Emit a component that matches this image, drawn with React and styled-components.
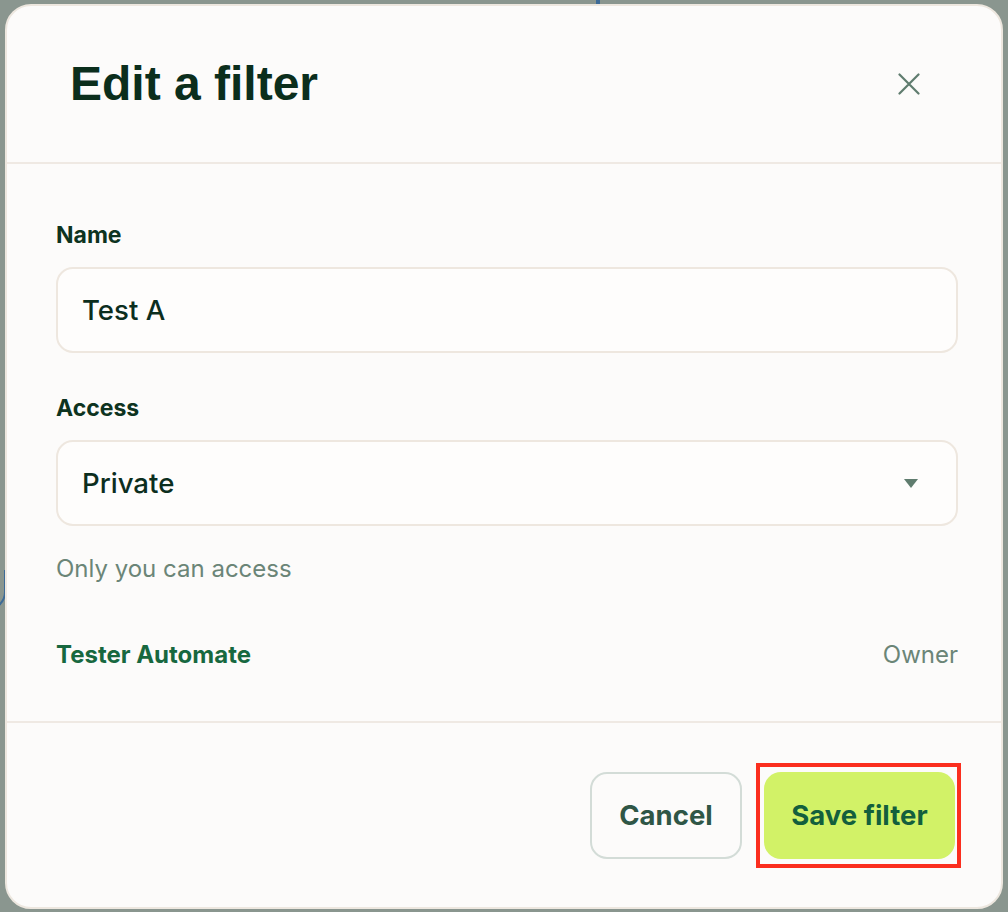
import React from "react";
import styled, { createGlobalStyle } from "styled-components";

const Global = createGlobalStyle`
  html, body { margin: 0; padding: 0; }
  body { background: #8a968f; font-family: Inter, "Noto Sans", sans-serif; }
  #root { width: 1008px; height: 912px; overflow: hidden; }
  * { box-sizing: border-box; }
`;

const Backdrop = styled.div`
  position: relative;
  width: 1008px;
  height: 912px;
  background: #8a968f;
  padding: 4px 0 0 5px;
`;

const PageBitTop = styled.div`
  position: absolute;
  left: 596px;
  top: 0;
  width: 4px;
  height: 4px;
  background: #3d6b97;
`;

const PageBitLeft = styled.div`
  position: absolute;
  left: -14px;
  top: 570px;
  width: 20px;
  height: 40px;
  border-right: 2px solid #3d6b97;
  border-bottom: 2px solid #3d6b97;
  border-radius: 0 0 18px 0;
`;

const Modal = styled.div`
  position: relative;
  width: 998px;
  background: #fcfbfa;
  border: 2px solid #ede7df;
  border-radius: 26px;
  display: flex;
  flex-direction: column;
`;

const Header = styled.div`
  height: 158px;
  border-bottom: 2px solid #efe9e3;
  display: flex;
  align-items: center;
  justify-content: space-between;
  padding: 0 72px 0 63px;
`;

const Title = styled.h1`
  margin: 0;
  font-family: "Liberation Sans", Arial, sans-serif;
  font-weight: 700;
  font-size: 48px;
  line-height: 56px;
  color: #0b2e1c;
`;

const CloseButton = styled.button`
  width: 40px;
  height: 40px;
  border: none;
  background: transparent;
  padding: 0;
  display: flex;
  align-items: center;
  justify-content: center;
  color: #5f7c6e;
  cursor: pointer;
`;

const Body = styled.div`
  padding: 57px 43px 52px 49px;
  border-bottom: 2px solid #efe9e3;
  display: flex;
  flex-direction: column;
`;

const Label = styled.label`
  font-size: 23px;
  line-height: 28px;
  font-weight: 700;
  color: #0d3320;
  margin-top: ${(p) => p.$top || 0}px;
`;

const Field = styled.div`
  margin-top: 18px;
  height: 86px;
  border: 2px solid #eee7df;
  border-radius: 17px;
  background: #fefdfc;
  display: flex;
  align-items: center;
  justify-content: space-between;
  padding: 0 38px 0 24px;
  font-size: 27.6px;
  font-weight: 500;
  color: #0c2e1e;
`;

const Caret = styled.span`
  width: 0;
  height: 0;
  border-left: 7px solid transparent;
  border-right: 7px solid transparent;
  border-top: 9px solid #5f7c6e;
`;

const Helper = styled.div`
  margin-top: 29px;
  font-size: 24px;
  line-height: 28px;
  color: #6b8577;
`;

const MemberRow = styled.div`
  margin-top: 58px;
  display: flex;
  justify-content: space-between;
  font-size: 24px;
  line-height: 28px;
`;

const MemberName = styled.span`
  font-weight: 700;
  color: #17683f;
`;

const Role = styled.span`
  color: #6b8577;
`;

const Footer = styled.div`
  height: 184px;
  display: flex;
  align-items: center;
  justify-content: flex-end;
  gap: 22px;
  padding-right: 46px;
`;

const Button = styled.button`
  position: relative;
  height: 87px;
  padding: 0 26px;
  border-radius: 17px;
  font-family: Inter, "Noto Sans", sans-serif;
  font-size: 27.5px;
  font-weight: 700;
  cursor: pointer;
  border: ${(p) => (p.$primary ? "none" : "2px solid #d3dcd7")};
  background: ${(p) => (p.$primary ? "#d2f267" : "transparent")};
  color: ${(p) => (p.$primary ? "#135f3d" : "#2f5646")};
  min-width: ${(p) => p.$w}px;
  ${(p) =>
    p.$highlight &&
    `
    &::after {
      content: "";
      position: absolute;
      left: -8px;
      top: -9px;
      right: -6px;
      bottom: -9px;
      border: 4px solid #fb2e1e;
      pointer-events: none;
    }
  `}
`;

export default function App() {
  return (
    <>
      <Global />
      <Backdrop>
        <PageBitTop />
        <PageBitLeft />
        <Modal>
          <Header>
            <Title>Edit a filter</Title>
            <CloseButton aria-label="Close">
              <svg width="22" height="22" viewBox="0 0 22 22" fill="none">
                <path d="M1.5 1.5L20.5 20.5M20.5 1.5L1.5 20.5" stroke="currentColor" strokeWidth="2.2" strokeLinecap="round" />
              </svg>
            </CloseButton>
          </Header>
          <Body>
            <Label>Name</Label>
            <Field>Test A</Field>
            <Label $top={41}>Access</Label>
            <Field>
              Private
              <Caret />
            </Field>
            <Helper>Only you can access</Helper>
            <MemberRow>
              <MemberName>Tester Automate</MemberName>
              <Role>Owner</Role>
            </MemberRow>
          </Body>
          <Footer>
            <Button $w={152}>Cancel</Button>
            <Button $primary $highlight $w={191}>Save filter</Button>
          </Footer>
        </Modal>
      </Backdrop>
    </>
  );
}
